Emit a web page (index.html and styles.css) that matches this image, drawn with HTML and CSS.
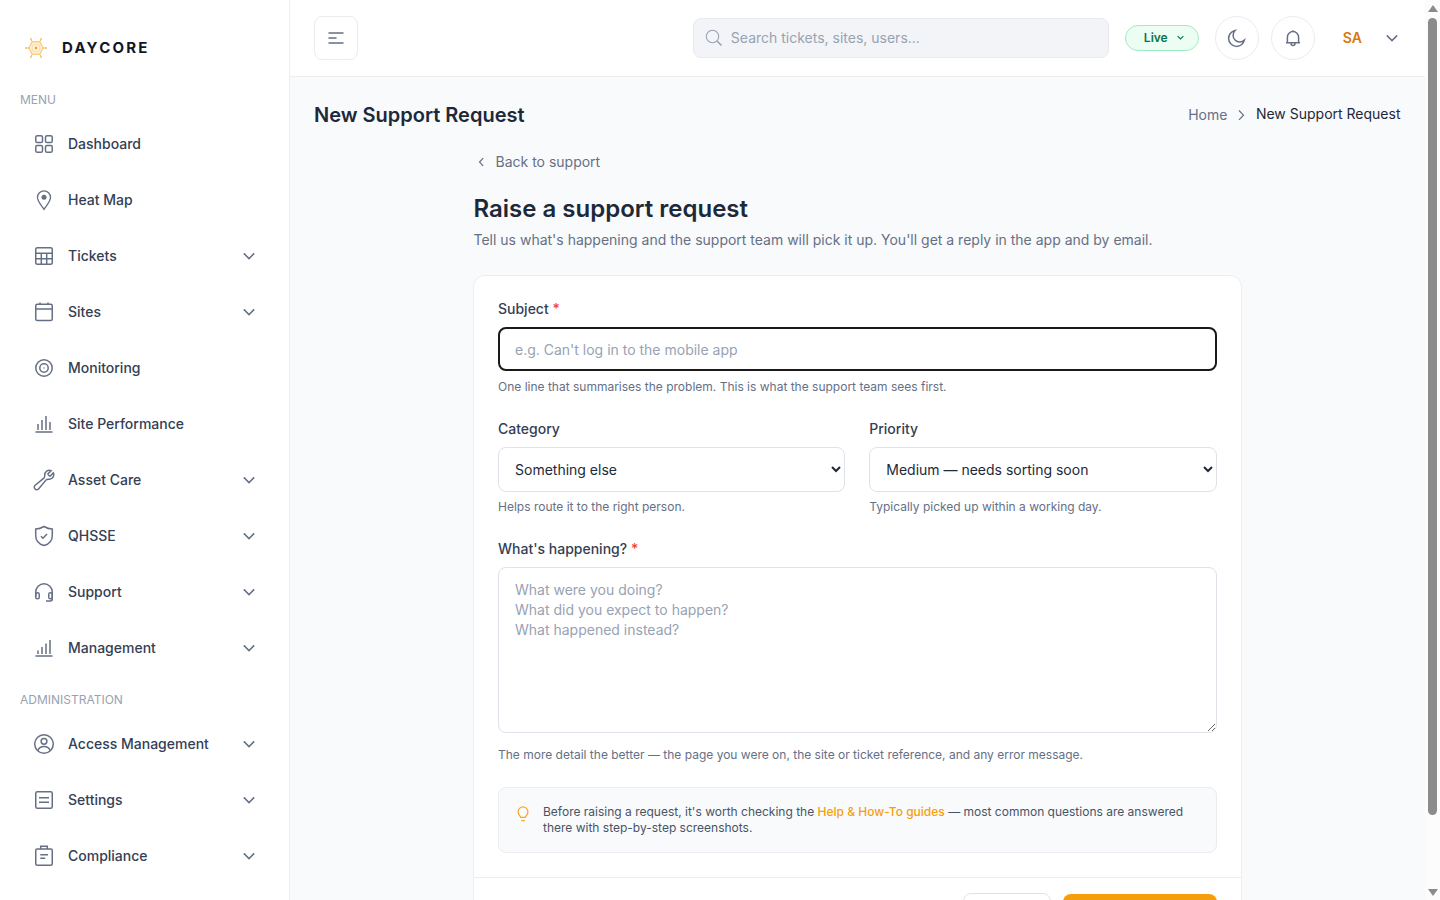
FILE: index.html
```html
<!DOCTYPE html>
<html lang="en">
<head>
<meta charset="utf-8">
<title>New Support Request | Daycore</title>
<link rel="stylesheet" href="styles.css">
</head>
<body>
<svg class="defs" aria-hidden="true">
  <symbol id="chev" viewBox="0 0 20 20"><path d="M4.8 7.4 10 12.6l5.2-5.2"/></symbol>
  <symbol id="bars" viewBox="0 0 24 24"><path d="M3.5 20h17M6 18v-6M10 18V8M14 18V4M18 18v-8"/></symbol>
</svg>
<div class="app">
  <aside class="sidebar">
    <div class="brand">
      <svg class="brand-mark" viewBox="0 0 24 24">
        <g stroke="#f9bd58" stroke-width="1" fill="none">
          <path d="M8.2 5.8h7.6l3.4 6.2-3.4 6.2H8.2L4.8 12z" fill="#fef0d8"/>
          <path d="m8.2 5.8-1.3-2.6m8.9 2.6 1.3-2.6M8.2 18.2l-1.3 2.6m8.9-2.6 1.3 2.6M4.8 12H2m17.200 0H22"/>
          <circle cx="12" cy="12" r="4" stroke="#fbd79c" stroke-width=".8"/>
        </g>
        <g fill="#fac368"><circle cx="6.900" cy="3" r="1"/><circle cx="17.100" cy="3" r="1"/><circle cx="6.900" cy="21" r="1"/><circle cx="17.100" cy="21" r="1"/><circle cx="2" cy="12" r="1"/><circle cx="22" cy="12" r="1"/></g>
        <circle cx="12" cy="12" r="1.200" fill="#f59e0b"/>
      </svg>
      <span class="brand-name">DAYCORE</span>
    </div>
    <h3 class="group">MENU</h3>
    <nav class="menu">
      <a class="item"><svg class="ic" viewBox="0 0 24 24"><rect x="3.750" y="3.750" width="6.750" height="6.750" rx="1.600"/><rect x="13.500" y="3.750" width="6.750" height="6.750" rx="1.600"/><rect x="3.750" y="13.500" width="6.750" height="6.750" rx="1.600"/><rect x="13.500" y="13.500" width="6.750" height="6.750" rx="1.600"/></svg><span>Dashboard</span></a>
      <a class="item"><svg class="ic thin" viewBox="0 0 24 24"><path d="M12 21.300c-2.200-3.500-6.500-7.500-6.500-12a6.500 6.500 0 0 1 13 0c0 4.500-4.300 8.500-6.500 12z"/><circle class="solid" cx="12" cy="9.200" r="2.500"/></svg><span>Heat Map</span></a>
      <a class="item"><svg class="ic" viewBox="0 0 24 24"><rect x="3.750" y="3.750" width="16.500" height="16.500" rx="1.500"/><path d="M3.750 9.200h16.500M3.750 14.700h16.500M9.300 9.200v11M14.700 9.200v11"/></svg><span>Tickets</span><svg class="chev"><use href="#chev"/></svg></a>
      <a class="item"><svg class="ic" viewBox="0 0 24 24"><rect x="3.750" y="4.300" width="16.500" height="16.200" rx="1.500"/><path d="M3.750 9h16.500M8 2.500v2M16 2.500v2"/></svg><span>Sites</span><svg class="chev"><use href="#chev"/></svg></a>
      <a class="item"><svg class="ic" viewBox="0 0 24 24"><circle cx="12" cy="12" r="8.250"/><circle cx="12" cy="12" r="4.200"/><circle class="solid" cx="12" cy="12" r=".7"/></svg><span>Monitoring</span></a>
      <a class="item"><svg class="ic"><use href="#bars"/></svg><span>Site Performance</span></a>
      <a class="item"><svg class="ic" viewBox="0 0 24 24"><path d="M21.750 6.750a4.500 4.500 0 0 1-4.884 4.484c-1.076-.091-2.264.071-2.950.904l-7.152 8.684a2.548 2.548 0 1 1-3.586-3.586l8.684-7.152c.833-.686.995-1.874.904-2.950a4.500 4.500 0 0 1 6.336-4.486l-3.276 3.276a3.004 3.004 0 0 0 2.250 2.250l3.276-3.276c.256.565.398 1.192.398 1.852z"/></svg><span>Asset Care</span><svg class="chev"><use href="#chev"/></svg></a>
      <a class="item"><svg class="ic" viewBox="0 0 24 24"><path d="M12 2.500c2.600 1.500 5.300 2.400 8.300 2.600v6.500c0 5-3.300 8.700-8.300 10-5-1.300-8.300-5-8.300-10V5.100c3-.2 5.700-1.100 8.300-2.600zM8.900 12.200l2.100 2 4-4.200"/></svg><span>QHSSE</span><svg class="chev"><use href="#chev"/></svg></a>
      <a class="item"><svg class="ic" viewBox="0 0 24 24"><path d="M3.750 17v-5a8.250 8.250 0 0 1 16.500 0v7c0 1.200-.8 1.900-2 1.900H14"/><rect x="3.750" y="12.800" width="3.500" height="6" rx="1.600"/><rect x="16.750" y="12.800" width="3.500" height="6" rx="1.600"/></svg><span>Support</span><svg class="chev"><use href="#chev"/></svg></a>
      <a class="item"><svg class="ic" viewBox="0 0 24 24"><path d="M3.500 20h17M6 18v-3.500M10 18v-7M14 18V7.500M18 18V4"/></svg><span>Management</span><svg class="chev"><use href="#chev"/></svg></a>
    </nav>
    <h3 class="group">ADMINISTRATION</h3>
    <nav class="menu">
      <a class="item"><svg class="ic" viewBox="0 0 24 24"><circle cx="12" cy="12" r="9.300"/><circle cx="12" cy="9.300" r="2.900"/><path d="M5.900 18.800c.7-2.700 3-4.300 6.100-4.300s5.400 1.600 6.100 4.300"/></svg><span>Access Management</span><svg class="chev"><use href="#chev"/></svg></a>
      <a class="item"><svg class="ic" viewBox="0 0 24 24"><rect x="3.750" y="3.750" width="16.500" height="16.500" rx="1.500"/><path d="M7 9.700h10M7 14.200h10"/></svg><span>Settings</span><svg class="chev"><use href="#chev"/></svg></a>
      <a class="item"><svg class="ic" viewBox="0 0 24 24"><rect x="3.750" y="5" width="16.500" height="16.300" rx="1.500"/><path d="M8.700 5V2.300h6.600V5M8.300 10.700H16M8.300 14.200h4.900"/></svg><span>Compliance</span><svg class="chev"><use href="#chev"/></svg></a>
    </nav>
  </aside>
  <div class="page">
    <header class="topbar">
      <button class="square"><svg class="burger" viewBox="0 0 16 12"><path d="M1 1h14M1 6h7M1 11h14"/></svg></button>
      <label class="search">
        <svg class="glass" viewBox="0 0 20 20"><circle cx="8.500" cy="8.500" r="6.200"/><path d="m13 13 4.500 4.500" stroke-width="1.600"/></svg>
        <input class="search-input" type="text" placeholder="Search tickets, sites, users...">
      </label>
      <button class="live">Live<svg class="live-chev" viewBox="0 0 20 20"><path d="M4.8 7.4 10 12.6l5.2-5.2"/></svg></button>
      <button class="round"><svg class="ic20" viewBox="0 0 20 20"><path d="M17.450 11.970A8 8 0 1 1 8.030 2.550a6.200 6.200 0 0 0 9.420 9.420z"/></svg></button>
      <button class="round"><svg class="ic20" viewBox="0 0 20 20"><path d="M4.400 14.600V9.200a5.600 5.600 0 0 1 11.200 0v5.400M3 14.700h14M8 14.800v.8a2 2 0 0 0 4 0v-.8M10 2.200v1.300"/></svg></button>
      <div class="user"><span>SA</span><svg class="user-chev"><use href="#chev"/></svg></div>
    </header>
    <main class="content">
      <div class="title-row">
        <h2 class="page-title">New Support Request</h2>
        <nav class="crumbs"><a class="crumb">Home</a><svg class="crumb-chev" viewBox="0 0 16 16"><path d="m6 3.500 4.500 4.700L6 12.900"/></svg><span class="crumb-now">New Support Request</span></nav>
      </div>
      <div class="column">
        <a class="back"><svg class="back-chev" viewBox="0 0 16 16"><path d="M9.200 4.200 5.500 8l3.700 3.800"/></svg>Back to support</a>
        <h1 class="heading">Raise a support request</h1>
        <p class="lead">Tell us what's happening and the support team will pick it up. You'll get a reply in the app and by email.</p>
        <form class="card">
          <div class="fields">
            <div class="field">
              <label class="label">Subject <b class="req">*</b></label>
              <input class="control subject" type="text" placeholder="e.g. Can't log in to the mobile app">
              <p class="hint">One line that summarises the problem. This is what the support team sees first.</p>
            </div>
            <div class="pair">
              <div class="field">
                <label class="label">Category</label>
                <select class="control"><option>Something else</option></select>
                <p class="hint">Helps route it to the right person.</p>
              </div>
              <div class="field">
                <label class="label">Priority</label>
                <select class="control"><option>Medium — needs sorting soon</option></select>
                <p class="hint">Typically picked up within a working day.</p>
              </div>
            </div>
            <div class="field">
              <label class="label">What's happening? <b class="req">*</b></label>
              <textarea class="control area" placeholder="What were you doing?&#10;What did you expect to happen?&#10;What happened instead?"></textarea>
              <p class="hint area-hint">The more detail the better — the page you were on, the site or ticket reference, and any error message.</p>
            </div>
            <div class="tip">
              <svg class="bulb" viewBox="0 0 18 18"><path d="M6.700 12.400c0-1.300-2.600-2.500-2.600-5.600a4.900 4.900 0 0 1 9.800 0c0 3.100-2.600 4.300-2.600 5.600zM7.200 15.700h3.600"/></svg>
              <p class="tip-text">Before raising a request, it's worth checking the <a class="tip-link">Help &amp; How-To guides</a> — most common questions are answered there with step-by-step screenshots.</p>
            </div>
          </div>
          <div class="actions"><button class="btn cancel">Cancel</button><button class="btn submit">Submit request</button></div>
        </form>
      </div>
    </main>
  </div>
  <div class="scrollbar"><i class="arrow up"></i><i class="thumb"></i><i class="arrow down"></i></div>
</div>
</body>
</html>
```
FILE: styles.css
```css
* { box-sizing: border-box; margin: 0; }
body { font: 400 14px/20px Inter, sans-serif; color: #1d2939; background: #f9fafb; overflow: hidden; }
button, input, select, textarea { font: inherit; }
svg { display: block; fill: none; stroke: #667085; stroke-width: 1.5; flex: none; }
.defs { display: none; }
.app { display: flex; height: 900px; overflow: hidden; }

.sidebar { width: 290px; flex: none; background: #fff; border-right: 1px solid #eceef2; padding: 32px 20px 0; overflow: hidden; }
.brand { display: flex; align-items: center; gap: 14px; height: 32px; padding-left: 4px; }
.brand-mark { width: 24px; height: 24px; stroke: none; }
.brand-name { font-size: 15px; font-weight: 700; letter-spacing: 2.2px; color: #101828; }
.group { font-size: 12px; font-weight: 400; line-height: 20px; color: #98a2b3; margin: 26px 0 6px; }
.menu { display: flex; flex-direction: column; }
.menu + .group { margin-top: 14px; }
.item { display: flex; align-items: center; gap: 12px; height: 56px; padding: 0 10px 0 12px; font-weight: 500; color: #344054; }
.ic { width: 24px; height: 24px; }
.thin { stroke-width: 1.3; }
.solid { fill: #667085; stroke: none; }
.chev { width: 20px; height: 20px; margin-left: auto; }

.page { width: 1135px; flex: none; }
.topbar { display: flex; align-items: center; height: 77px; padding: 0 23px 1px 24px; background: #fff; border-bottom: 1px solid #eceef2; }
.square, .round { width: 44px; height: 44px; display: flex; align-items: center; justify-content: center; padding: 0; background: #fff; border: 1px solid #eaecf0; border-radius: 8px; }
.round { border-radius: 50%; margin-left: 16px; }
.round + .round { margin-left: 12px; }
.burger { width: 16px; height: 12px; stroke-linecap: round; }
.search { display: flex; align-items: center; gap: 7px; width: 416px; height: 40px; margin-left: auto; padding: 0 10px; background: #f2f4f7; border: 1px solid #e8eaef; border-radius: 8px; }
.glass { width: 20px; height: 20px; stroke: #98a2b3; stroke-width: 1.1; }
.search-input { flex: 1; border: 0; padding: 0; background: none; }
.search-input::placeholder, .control::placeholder { color: #98a2b3; opacity: 1; }
.live { display: flex; align-items: center; gap: 7px; width: 74px; height: 26px; margin-left: 16px; padding: 0 0 0 18px; font-size: 12px; font-weight: 600; color: #067647; background: #ecfdf3; border: 1px solid #a0ecc2; border-radius: 13px; }
.live-chev { width: 11px; height: 11px; stroke: #067647; stroke-width: 2; }
.ic20 { width: 20px; height: 20px; }
.user { display: flex; align-items: center; gap: 20px; margin-left: 28px; color: #d9780b; font-weight: 600; }
.user-chev { width: 20px; height: 20px; margin-top: 1px; }

.content { padding: 24px; }
.title-row { display: flex; justify-content: space-between; align-items: center; height: 28px; }
.page-title { font-size: 20px; line-height: 28px; font-weight: 600; }
.crumbs { display: flex; align-items: center; gap: 6px; }
.crumb { color: #667085; }
.crumb-chev { width: 16px; height: 16px; stroke-width: 1.2; }
.crumb-now { margin: -2px .5px 0 .5px; }
.column { width: 768px; margin: 23px auto 0; }
.back { display: flex; align-items: center; gap: 6px; color: #667085; }
.back-chev { width: 16px; height: 16px; stroke-width: 1.2; }
.heading { font-size: 24px; line-height: 32px; font-weight: 600; margin-top: 20.500px; }
.lead { color: #667085; margin-top: 5.500px; }
.card { width: 768.500px; margin: 25px 0 0 -.5px; background: #fff; border: 1px solid #eceef2; border-radius: 12px; }
.fields { padding: 23px 24px 24px; }
.label { display: block; font-weight: 500; color: #344054; margin-bottom: 8px; }
.req { font-weight: 500; color: #f04438; }
.control { display: block; width: 100%; height: 44px; padding: 11px 16px; color: #1d2939; background: #fff; border: 1px solid #dfe2e8; border-radius: 8px; }
select.control { height: 45px; margin-bottom: -1px; padding: 0 0 0 12px; }
.subject { outline: 2px solid #1a1a1a; outline-offset: -2px; border-color: transparent; }
.hint { font-size: 12px; line-height: 18px; margin-top: 7px; color: #667085; }
.pair { display: grid; grid-template-columns: 1fr 1fr; gap: 24px; margin: 23px 0; }
.area { height: 166px; padding: 12px 16px; resize: vertical; }
.area-hint { margin-top: 13px; }
.tip { display: flex; gap: 11px; height: 66px; margin-top: 23px; padding: 16px 15px; background: #f9fafb; border: 1px solid #eaecf0; border-radius: 8px; }
.bulb { width: 18px; height: 18px; margin-top: 1px; stroke: #f9a825; stroke-width: 1.3; }
.tip-text { font-size: 12px; line-height: 16px; color: #475467; }
.tip-link { font-weight: 500; color: #f79e0b; }
.actions { display: flex; justify-content: flex-end; align-items: center; gap: 12px; padding: 15px 24px; border-top: 1px solid #eceef2; }
.btn { height: 42px; border-radius: 8px; font-weight: 500; padding: 0; }
.cancel { width: 88px; height: 44px; background: #fff; border: 1px solid #dfe2e8; color: #344054; }
.submit { width: 154px; background: #f59e0b; border: 0; color: #fff; }

.scrollbar { width: 15px; flex: none; display: flex; flex-direction: column; align-items: center; background: #fcfcfc; padding: 5px 0 4px; }
.arrow { border: 5px solid transparent; }
.up { border-top: 0; border-bottom: 7px solid #8b8b8b; }
.down { border-bottom: 0; border-top: 7px solid #8b8b8b; margin-top: auto; }
.thumb { width: 9px; height: 797px; margin-top: 6px; border-radius: 5px; background: #8b8b8b; }
```
